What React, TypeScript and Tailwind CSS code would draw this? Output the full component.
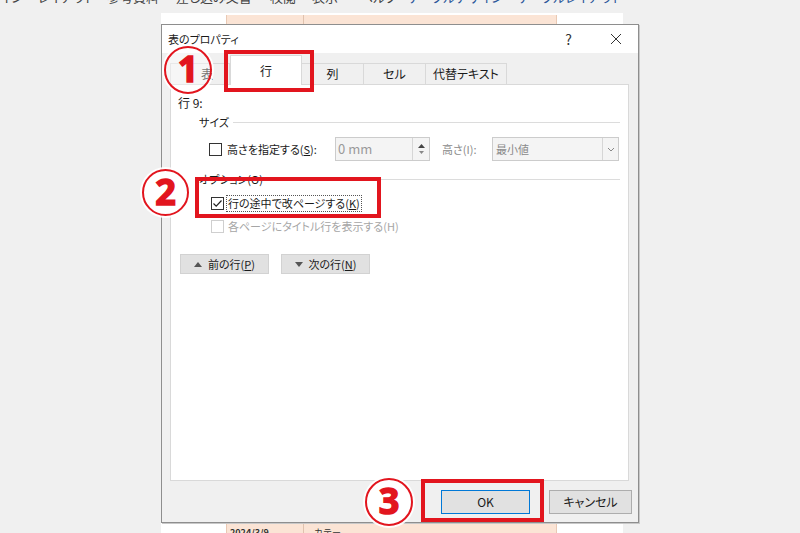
import React from "react";

const RED = "border-[#e2151e]";

function Checkbox({ checked, disabled }: { checked?: boolean; disabled?: boolean }) {
  return (
    <span
      className={`flex items-center justify-center w-[13px] h-[13px] border bg-white shrink-0 ${
        disabled ? "border-[#cfcfcf]" : "border-[#333]"
      }`}
    >
      {checked && (
        <svg width="11" height="11" viewBox="0 0 11 11">
          <polyline points="1.5,5.5 4.2,8.2 9.5,2.5" fill="none" stroke="#222" strokeWidth="1.2" />
        </svg>
      )}
    </span>
  );
}

function Circle({ n, fill }: { n: string; fill: string }) {
  return (
    <div
      className={`w-full h-full rounded-full border-2 border-[#e2151e] ${fill} flex items-center justify-center shadow-[0_0_0_2px_rgba(255,255,255,0.9)]`}
    >
      <span className="text-[#e2151e] text-[36px] leading-none font-bold [-webkit-text-stroke:1.5px_#e2151e] [font-family:'Noto_Sans','DejaVu_Sans',sans-serif] mt-[-2px]">
        {n}
      </span>
    </div>
  );
}

const RIBBON = [
  { t: "イン", w: "w-[38px]", c: "text-[#444]" },
  { t: "レイアウト", w: "w-[69px]", c: "text-[#444]" },
  { t: "参考資料", w: "w-[69px]", c: "text-[#444]" },
  { t: "差し込み文書", w: "w-[94px]", c: "text-[#444]" },
  { t: "校閲", w: "w-[42px]", c: "text-[#444]" },
  { t: "表示", w: "w-[48px]", c: "text-[#444]" },
  { t: "ヘルプ", w: "w-[48px]", c: "text-[#444]" },
  { t: "テーブルデザイン", w: "w-[110px]", c: "text-[#2b579a]" },
  { t: "テーブルレイアウト", w: "w-[100px]", c: "text-[#2b579a]" },
];

export default function App() {
  return (
    <div className="relative w-[800px] h-[533px] overflow-hidden bg-[#f0f0f0] flex flex-col [font-family:'Noto_Sans_CJK_JP',sans-serif] text-[#1a1a1a]">
      {/* ribbon tabs, cut at the top */}
      <div className="h-[13px] overflow-hidden shrink-0">
        <div className="flex mt-[-11px] text-[13px] leading-[16px] whitespace-nowrap [font-feature-settings:'palt']">
          {RIBBON.map((r) => (
            <span key={r.t} className={`${r.w} ${r.c}`}>
              {r.t}
            </span>
          ))}
        </div>
      </div>

      {/* document page behind the dialog */}
      <div className="flex-1 ml-[161px] w-[462px] bg-white flex">
        <div className="ml-[65px] mt-[2px] w-[331px] bg-[#fbe4d5] border-x border-[#e9c9b4] flex">
          <div className="w-[77px] border-r border-[#e0c2ae] flex flex-col justify-end">
            <span className="text-[9px] font-bold leading-[12px] pl-[3px] mb-[-6px] text-[#333]">2024/3/9</span>
          </div>
          <div className="flex-1 flex flex-col justify-end">
            <span className="text-[9px] leading-[12px] pl-[10px] mb-[-6px] text-[#333]">カテー</span>
          </div>
        </div>
      </div>

      {/* dialog */}
      <div className="absolute left-[161px] top-[24px] w-[478px] h-[499px] bg-[#f0f0f0] border border-[#8e8e8e] shadow-[1px_1px_0_#c8c8c8] flex flex-col text-[11px] [font-feature-settings:'palt']">
        <div className="h-[28px] bg-white flex items-center pl-[6px] shrink-0">
          <span className="text-[11px]">表のプロパティ</span>
          <span className="ml-auto text-[14px] text-[#333] mr-[38px]">?</span>
          <svg width="12" height="12" viewBox="0 0 12 12" className="mr-[16px]">
            <path d="M1 1 L11 11 M11 1 L1 11" stroke="#333" strokeWidth="1" />
          </svg>
        </div>

        {/* tabs */}
        <div className="h-[31px] pl-[8px] flex items-end shrink-0 text-[12px]">
          <div className="w-[60px] h-[21px] bg-[#f0f0f0] border border-b-0 border-[#d9d9d9] flex items-center justify-center pl-[14px]">
            表
          </div>
          <div className="relative z-10 w-[72px] h-[30px] -mb-px bg-white border border-b-0 border-[#d9d9d9] flex items-center justify-center">
            行
          </div>
          <div className="w-[62px] h-[21px] bg-[#f0f0f0] border border-l-0 border-b-0 border-[#d9d9d9] flex items-center justify-center">
            列
          </div>
          <div className="w-[62px] h-[21px] bg-[#f0f0f0] border border-l-0 border-b-0 border-[#d9d9d9] flex items-center justify-center">
            セル
          </div>
          <div className="w-[81px] h-[21px] bg-[#f0f0f0] border border-l-0 border-b-0 border-[#d9d9d9] flex items-center justify-center">
            代替テキスト
          </div>
        </div>

        {/* panel */}
        <div className="ml-[8px] w-[459px] h-[397px] bg-white border border-[#d9d9d9] flex flex-col shrink-0">
          <div className="h-[16px] mt-[10px] pl-[7px] leading-[16px] text-[12px]">行 9:</div>

          <div className="h-[16px] mt-[3px] pl-[28px] flex items-center">
            <span>サイズ</span>
            <span className="flex-1 h-px bg-[#dcdcdc] ml-[4px] mr-[8px]" />
          </div>

          <div className="h-[24px] mt-[7px] pl-[38px] flex items-center">
            <Checkbox />
            <span className="w-[113px] pl-[5px] whitespace-nowrap">
              高さを指定する(<span className="underline">S</span>):
            </span>
            <div className="w-[95px] h-[24px] border border-[#cccccc] bg-[#f4f4f4] flex">
              <span className="flex-1 pl-[2px] text-[#9a9a9a] text-[13px] leading-[22px]">0 mm</span>
              <div className="w-[17px] border-l border-[#d6d6d6] flex flex-col items-center justify-center gap-[3px]">
                <svg width="7" height="4" viewBox="0 0 7 4">
                  <polygon points="0,4 3.5,0 7,4" fill="#444" />
                </svg>
                <svg width="5" height="3" viewBox="0 0 5 3">
                  <polygon points="0,0 2.5,3 5,0" fill="#888" />
                </svg>
              </div>
            </div>
            <span className="ml-[12px] w-[50px] text-[#8a8a8a]">高さ(I):</span>
            <div className="w-[127px] h-[24px] border border-[#cccccc] bg-[#f4f4f4] flex">
              <span className="flex-1 pl-[3px] text-[#8a8a8a] leading-[22px]">最小値</span>
              <div className="w-[16px] border-l border-[#d6d6d6] flex items-center justify-center">
                <svg width="8" height="5" viewBox="0 0 8 5">
                  <polyline points="1,1 4,4 7,1" fill="none" stroke="#888" strokeWidth="1" />
                </svg>
              </div>
            </div>
          </div>

          <div className="h-[16px] mt-[10px] pl-[28px] flex items-center">
            <span>オプション(O)</span>
            <span className="flex-1 h-px bg-[#dcdcdc] ml-[4px] mr-[8px]" />
          </div>

          <div className="h-[18px] mt-[7px] pl-[40px] flex items-center">
            <Checkbox checked />
            <span className="ml-[2px] px-[1px] border border-dotted border-[#555] leading-[15px] whitespace-nowrap">
              行の途中で改ページする(<span className="underline">K</span>)
            </span>
          </div>

          <div className="h-[16px] mt-[6px] pl-[40px] flex items-center text-[#a6a6a6]">
            <Checkbox disabled />
            <span className="ml-[4px] whitespace-nowrap">各ページにタイトル行を表示する(H)</span>
          </div>

          <div className="h-[20px] mt-[20px] pl-[9px] flex gap-[12px]">
            <div className="w-[89px] h-[20px] bg-[#e1e1e1] border border-[#d2d2d2] flex items-center justify-center gap-[6px]">
              <svg width="8" height="5" viewBox="0 0 8 5">
                <polygon points="0,5 4,0 8,5" fill="#555" />
              </svg>
              <span>
                前の行(<span className="underline">P</span>)
              </span>
            </div>
            <div className="w-[89px] h-[20px] bg-[#e1e1e1] border border-[#d2d2d2] flex items-center justify-center gap-[6px]">
              <svg width="8" height="5" viewBox="0 0 8 5">
                <polygon points="0,0 4,5 8,0" fill="#555" />
              </svg>
              <span>
                次の行(<span className="underline">N</span>)
              </span>
            </div>
          </div>
        </div>

        {/* footer buttons */}
        <div className="flex-1 flex justify-end items-start pt-[9px] pr-[6px] gap-[19px] text-[12px]">
          <div className="w-[89px] h-[24px] bg-[#e1e1e1] border border-[#0078d7] flex items-center justify-center">
            OK
          </div>
          <div className="w-[83px] h-[24px] bg-[#e1e1e1] border border-[#adadad] flex items-center justify-center">
            キャンセル
          </div>
        </div>
      </div>

      {/* annotations */}
      <div className={`absolute left-[224px] top-[50px] w-[90px] h-[42px] border-4 ${RED}`} />
      <div className={`absolute left-[195px] top-[177px] w-[186px] h-[41px] border-4 ${RED}`} />
      <div className={`absolute left-[421px] top-[479px] w-[123px] h-[43px] border-4 ${RED}`} />

      <div className="absolute left-[164px] top-[46px] w-[48px] h-[48px]">
        <Circle n="1" fill="bg-white/40" />
      </div>
      <div className="absolute left-[142px] top-[169px] w-[47px] h-[47px]">
        <Circle n="2" fill="bg-white" />
      </div>
      <div className="absolute left-[365px] top-[478px] w-[48px] h-[48px]">
        <Circle n="3" fill="bg-white" />
      </div>
    </div>
  );
}
